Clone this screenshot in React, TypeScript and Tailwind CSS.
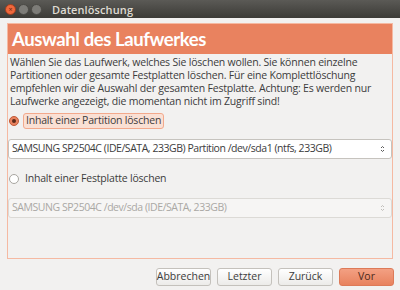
import React from "react";

const font = { fontFamily: '"Open Sans", "DejaVu Sans", sans-serif' };

function UpDown({ color }: { color: string }) {
  return (
    <svg width="5" height="8" viewBox="0 0 5 8">
      <path d="M1 3 L2.5 1.5 L4 3" fill="none" stroke={color} strokeWidth="1" />
      <path d="M1 5 L2.5 6.5 L4 5" fill="none" stroke={color} strokeWidth="1" />
    </svg>
  );
}

export default function App() {
  return (
    <div className="w-[400px] h-[290px] bg-[#f2f1f0] flex flex-col overflow-hidden" style={font}>
      <div className="h-[18px] flex items-center bg-gradient-to-b from-[#5b5a56] to-[#3c3b37] pl-[5px]">
        <div className="flex items-center gap-[2px]">
          <div className="w-[11px] h-[11px] rounded-full bg-[#f0683c] border border-[#9c3e20] flex items-center justify-center text-[7px] leading-none text-[#6a2410]">×</div>
          <div className="w-[11px] h-[11px] rounded-full bg-[#7d7c78] border border-[#4a4945]"></div>
          <div className="w-[11px] h-[11px] rounded-full bg-[#7d7c78] border border-[#4a4945]"></div>
        </div>
        <div className="ml-[10px] text-[11px] font-semibold text-[#dfdbd2] leading-none tracking-[0.1px]">Datenlöschung</div>
      </div>
      <div className="mx-[7px] mt-[5px] h-[236px] border border-[#f5b9a2] flex flex-col">
        <div className="h-[30px] bg-[#e9825f] flex items-center px-[4px]">
          <span className="text-white font-bold text-[18.5px] leading-none tracking-[-0.4px]" style={{ fontFamily: 'Lato, "Open Sans", sans-serif' }}>Auswahl des Laufwerkes</span>
        </div>
        <div className="px-[2px] pt-[2px] text-[10.5px] leading-[13px] text-[#3c3c3c] tracking-[-0.2px]">
          Wählen Sie das Laufwerk, welches Sie löschen wollen. Sie können einzelne<br />
          Partitionen oder gesamte Festplatten löschen. Für eine Komplettlöschung<br />
          empfehlen wir die Auswahl der gesamten Festplatte. Achtung: Es werden nur<br />
          Laufwerke angezeigt, die momentan nicht im Zugriff sind!
        </div>
        <div className="flex items-center mt-[5px] ml-[1px]">
          <div className="w-[10px] h-[10px] rounded-full bg-[#e9825f] border border-[#c05a38] flex items-center justify-center">
            <div className="w-[4px] h-[4px] rounded-full bg-[#5a2a1a]"></div>
          </div>
          <div className="ml-[4px] h-[16px] px-[2px] flex items-center bg-[#fae0d4] border border-[#f2a98c] rounded-[3px] text-[10.5px] text-[#3c3c3c] tracking-[-0.2px]">
            Inhalt einer Partition löschen
          </div>
        </div>
        <div className="mt-[10px] h-[20px] bg-white border border-[#c6c3be] rounded-[3px] flex items-center justify-between pl-[3px] pr-[6px] text-[10.5px] text-[#3c3c3c] tracking-[-0.45px]">
          <span>SAMSUNG SP2504C (IDE/SATA, 233GB) Partition /dev/sda1 (ntfs, 233GB)</span>
          <UpDown color="#5a5a5a" />
        </div>
        <div className="flex items-center mt-[12px] ml-[1px]">
          <div className="w-[10px] h-[10px] rounded-full bg-white border border-[#a8a5a0]"></div>
          <div className="ml-[6px] text-[10.5px] text-[#3c3c3c] tracking-[-0.2px]">Inhalt einer Festplatte löschen</div>
        </div>
        <div className="mt-[11px] h-[20px] bg-[#f6f5f4] border border-[#dcdad6] rounded-[3px] flex items-center justify-between pl-[3px] pr-[6px] text-[10.5px] text-[#aaa8a4] tracking-[-0.45px]">
          <span>SAMSUNG SP2504C /dev/sda (IDE/SATA, 233GB)</span>
          <UpDown color="#c0beba" />
        </div>
      </div>
      <div className="flex justify-end gap-[6px] mt-[9px] pr-[6px]">
        {["Abbrechen", "Letzter", "Zurück"].map((t) => (
          <div key={t} className="w-[55px] h-[18px] rounded-[3px] border border-[#c4c1bc] bg-gradient-to-b from-[#ffffff] to-[#ecebe9] flex items-center justify-center text-[10.5px] text-[#3c3c3c]">
            {t}
          </div>
        ))}
        <div className="w-[55px] h-[18px] rounded-[3px] border border-[#dd7a58] bg-gradient-to-b from-[#f3a083] to-[#e8825e] flex items-center justify-center text-[10.5px] text-[#4a2a1c]">
          Vor
        </div>
      </div>
    </div>
  );
}
